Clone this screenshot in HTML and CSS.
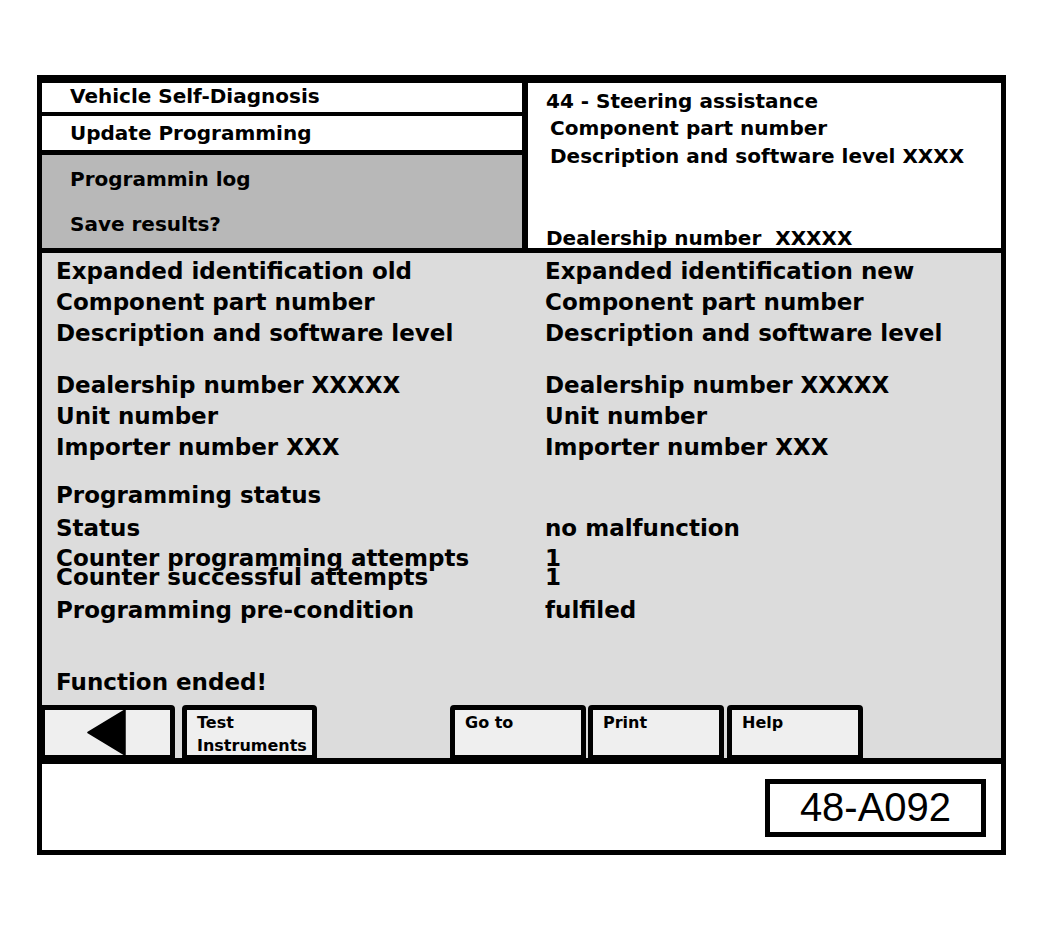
FILE: index.html
```html
<!DOCTYPE html>
<html>
<head>
<meta charset="utf-8">
<link rel="stylesheet" href="styles.css">
</head>
<body>
<div class="frame">
  <div class="top">
    <div class="menu">
      <div class="menu-item menu-first">Vehicle Self-Diagnosis</div>
      <div class="menu-item menu-second">Update Programming</div>
      <div class="menu-sub">
        <div>Programmin log</div>
        <div>Save results?</div>
      </div>
    </div>
    <div class="info">
      <div class="info-line">44 - Steering assistance</div>
      <div class="info-line indent">Component part number</div>
      <div class="info-line indent">Description and software level XXXX</div>
      <div class="info-line info-last">Dealership number&nbsp; XXXXX</div>
    </div>
  </div>
  <div class="main">
    <div class="rows">
      <div class="row"><span>Expanded identification old</span><span>Expanded identification new</span></div>
      <div class="row"><span>Component part number</span><span>Component part number</span></div>
      <div class="row"><span>Description and software level</span><span>Description and software level</span></div>
      <div class="row group-a"><span>Dealership number XXXXX</span><span>Dealership number XXXXX</span></div>
      <div class="row"><span>Unit number</span><span>Unit number</span></div>
      <div class="row"><span>Importer number XXX</span><span>Importer number XXX</span></div>
      <div class="row group-b"><span>Programming status</span><span></span></div>
      <div class="row row-status"><span>Status</span><span>no malfunction</span></div>
      <div class="row tight tight-first"><span>Counter programming attempts</span><span>1</span></div>
      <div class="row tight"><span>Counter successful attempts</span><span>1</span></div>
      <div class="row row-pre"><span>Programming pre-condition</span><span>fulfiled</span></div>
      <div class="row row-end"><span>Function ended!</span><span></span></div>
    </div>
    <div class="buttons">
      <div class="btn btn-back">
        <svg class="back-arrow" width="125" height="45" viewBox="0 0 125 45">
          <polygon points="80,0 43,22.5 80,45" fill="#000" stroke="#000" stroke-width="1.5" stroke-linejoin="round"/>
        </svg>
      </div>
      <div class="btn btn-test">Test<br>Instruments</div>
      <div class="btn btn-goto">Go to</div>
      <div class="btn btn-print">Print</div>
      <div class="btn btn-help">Help</div>
    </div>
  </div>
  <div class="bottom">
    <div class="label">48-A092</div>
  </div>
</div>
</body>
</html>
```
FILE: styles.css
```css
html, body {
  margin: 0;
  padding: 0;
  background: #fff;
}

body {
  font-family: "DejaVu Sans", "Liberation Sans", sans-serif;
  font-weight: bold;
  color: #000;
}

.frame {
  box-sizing: border-box;
  width: 969px;
  height: 780px;
  margin: 75px 0 0 37px;
  border: 5px solid #000;
  display: flex;
  flex-direction: column;
  background: #fff;
}

/* ---------- top section ---------- */
.top {
  box-sizing: border-box;
  height: 173px;
  flex: none;
  display: flex;
  border-top: 3px solid #000;
  border-bottom: 5px solid #000;
}

.menu {
  box-sizing: border-box;
  width: 486px;
  flex: none;
  display: flex;
  flex-direction: column;
  border-right: 6px solid #000;
  font-size: 20px;
}

.menu-item {
  background: #fff;
  padding-left: 28px;
  white-space: nowrap;
}

.menu-first {
  height: 29px;
  line-height: 26px;
  border-bottom: 4px solid #000;
}

.menu-second {
  height: 34px;
  line-height: 34px;
  border-bottom: 5px solid #000;
}

.menu-sub {
  flex: 1;
  background: #b8b8b8;
  padding: 2px 0 0 28px;
  line-height: 45.6px;
}

.info {
  flex: 1;
  display: flex;
  flex-direction: column;
  padding: 4.6px 0 0 18px;
  font-size: 20px;
  line-height: 27.5px;
  background: #fff;
  white-space: nowrap;
}

.indent {
  padding-left: 4px;
}

.info-last {
  margin-top: auto;
  line-height: 20px;
}

/* ---------- main section ---------- */
.main {
  box-sizing: border-box;
  height: 511px;
  flex: none;
  display: flex;
  flex-direction: column;
  background: #dcdcdc;
  border-bottom: 6px solid #000;
}

.rows {
  padding: 2.5px 0 0 14px;
  font-size: 23px;
  line-height: 31px;
}

.row {
  display: grid;
  grid-template-columns: 489px auto;
  white-space: nowrap;
}

.group-a {
  margin-top: 21px;
}

.group-b {
  margin-top: 17px;
}

.row-status {
  margin-top: 2px;
}

.tight {
  line-height: 19.5px;
}

.tight-first {
  margin-top: 5.3px;
}

.row-pre {
  margin-top: 7.7px;
}

.row-end {
  margin-top: 40.5px;
}

.buttons {
  margin-top: auto;
  height: 53px;
  display: flex;
  align-items: stretch;
}

.btn {
  box-sizing: border-box;
  width: 136px;
  border: 5px solid #000;
  border-bottom-width: 3px;
  border-radius: 4px 4px 0 0;
  background: #efefef;
  font-size: 16px;
  line-height: 23px;
  padding: 1px 0 0 10px;
  white-space: nowrap;
}

.btn-back {
  width: 133px;
  border-left-width: 3px;
  border-radius: 0 4px 0 0;
  padding: 0;
}

.back-arrow {
  display: block;
}

.btn-test {
  width: 135px;
  margin-left: 7px;
}

.btn-goto {
  margin-left: 133px;
}

.btn-print {
  margin-left: 2px;
}

.btn-help {
  margin-left: 3px;
}

/* ---------- bottom section ---------- */
.bottom {
  box-sizing: border-box;
  flex: 1;
  display: flex;
  justify-content: flex-end;
  align-items: flex-start;
  padding: 15px 15px 0 0;
  background: #fff;
}

.label {
  box-sizing: border-box;
  width: 221px;
  height: 58px;
  border: 5px solid #000;
  display: flex;
  align-items: center;
  justify-content: center;
  padding-bottom: 2px;
  font-family: "Liberation Sans", Arial, sans-serif;
  font-weight: normal;
  font-size: 40px;
}
```
